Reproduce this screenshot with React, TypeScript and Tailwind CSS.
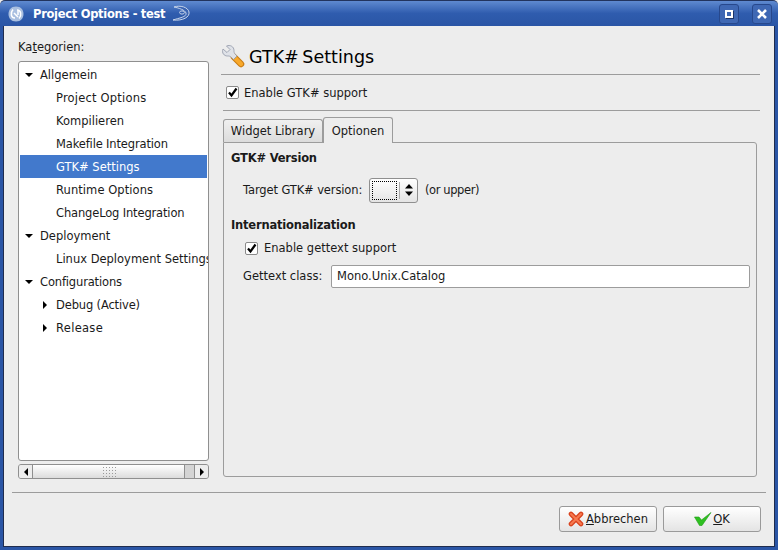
import type { ReactNode } from 'react'

type TreeRow = {
  label: string
  depth: 0 | 1
  arrow?: 'down' | 'right'
  selected?: boolean
  tracking?: string
}

const rows: TreeRow[] = [
  { label: 'Allgemein', depth: 0, arrow: 'down' },
  { label: 'Project Options', depth: 1, tracking: 'tracking-[0.2px]' },
  { label: 'Kompilieren', depth: 1 },
  { label: 'Makefile Integration', depth: 1, tracking: 'tracking-[-0.15px]' },
  { label: 'GTK# Settings', depth: 1, selected: true },
  { label: 'Runtime Options', depth: 1, tracking: 'tracking-[0.07px]' },
  { label: 'ChangeLog Integration', depth: 1, tracking: 'tracking-[-0.15px]' },
  { label: 'Deployment', depth: 0, arrow: 'down' },
  { label: 'Linux Deployment Settings', depth: 1 },
  { label: 'Configurations', depth: 0, arrow: 'down', tracking: 'tracking-[-0.15px]' },
  { label: 'Debug (Active)', depth: 1, arrow: 'right', tracking: 'tracking-[-0.15px]' },
  { label: 'Release', depth: 1, arrow: 'right', tracking: 'tracking-[0.3px]' },
]

function Arrow({ dir }: { dir: 'down' | 'right' | 'left' }) {
  const pts = dir === 'down' ? '1,3 9,3 5,7' : dir === 'right' ? '3,1 7,5 3,9' : '7,1 3,5 7,9'
  return (
    <svg width="10" height="10" viewBox="0 0 10 10" className="shrink-0">
      <polygon points={pts} fill="#000" />
    </svg>
  )
}

function Check() {
  return (
    <span className="flex h-[13px] w-[13px] shrink-0 items-center justify-center rounded-[2px] border border-[#8a8a8a] bg-white">
      <svg width="11" height="11" viewBox="0 0 11 11">
        <path d="M2 5.5 L4.5 8.5 L9.5 1.5" fill="none" stroke="#000" strokeWidth="2.2" />
      </svg>
    </span>
  )
}

function WindowButton({ children }: { children: ReactNode }) {
  return (
    <div className="flex h-5 w-5 items-center justify-center rounded-[3px] border border-[#27488c] bg-[#3f68b4]">
      {children}
    </div>
  )
}

function ProjectIcon() {
  return (
    <svg width="16" height="18" viewBox="0 0 16 18">
      <path d="M8 1.5 C13 1.5 15.5 5 15.5 9 C15.5 13 13 16.5 8 16.5 C3 16.5 0.5 13 0.5 9 C0.5 5 3 1.5 8 1.5 Z" fill="#a9bfe0" />
      <path d="M5 4.5 C2 8 3 13 7 13 M11 13.5 C14 10 13 5 9 5 M6 8 L10 12 M10 6 L10 10" fill="none" stroke="#fff" strokeWidth="1.5" />
    </svg>
  )
}

function LizardIcon() {
  return (
    <svg width="20" height="18" viewBox="0 0 20 18">
      <path d="M3 2 C9 0 17 2 18 7 C19 12 12 16 2 15 C8 13 16 12 15 8 C14 5 8 3 3 2 Z" fill="#3a64b2" stroke="#c6d4ea" strokeWidth="1" />
      <ellipse cx="11" cy="7.5" rx="2.4" ry="1.6" fill="none" stroke="#c6d4ea" />
    </svg>
  )
}

function WrenchIcon() {
  return (
    <svg width="24" height="24" viewBox="0 0 24 24">
      <path d="M13 13 L20 20" stroke="#c87a10" strokeWidth="6.5" strokeLinecap="round" />
      <path d="M14.5 14.5 L20 20" stroke="#f8a92c" strokeWidth="4.5" strokeLinecap="round" />
      <path d="M2 5 L6 8.5 L9 5.5 L5.5 2 C9 0.5 13 2.5 13 6.5 C13 8 13 9 14.5 10.5 L16 12 L12.5 15.5 L10.5 13.5 C9 12 8 12 6.5 12 C3 12 0.5 9 2 5 Z" fill="#dfe2e8" stroke="#8f96a6" strokeWidth="0.8" />
    </svg>
  )
}

function CancelIcon() {
  return (
    <svg width="16" height="16" viewBox="0 0 16 16">
      <path d="M3 3 L13 13 M13 3 L3 13" stroke="#d9441f" strokeWidth="4.6" strokeLinecap="round" />
      <path d="M3 3 L13 13 M13 3 L3 13" stroke="#f77a50" strokeWidth="2" strokeLinecap="round" />
    </svg>
  )
}

function OkIcon() {
  return (
    <svg width="18" height="14" viewBox="0 0 18 14">
      <path d="M0.5 5 L5 5 L7.5 8 L17 0.5 L8 13.5 L5.5 13.5 Z" fill="#2fc021" stroke="#1c9a14" strokeWidth="0.6" />
    </svg>
  )
}

function DialogButton({ icon, children, gap }: { icon: ReactNode; children: ReactNode; gap: string }) {
  return (
    <div className={`flex h-[26px] w-[98px] items-center justify-center rounded-[3px] border border-[#9a9a9a] bg-gradient-to-b from-white to-[#e4e4e4] ${gap}`}>
      {icon}
      <span>{children}</span>
    </div>
  )
}

export default function App() {
  return (
    <div className="flex h-[550px] w-[778px] flex-col overflow-hidden bg-[#ededed] text-[11.5px] leading-[14px] text-[#1a1a1a] [font-family:'DejaVu_Sans',sans-serif]">
      <header className="flex h-[26px] shrink-0 items-center rounded-t-[5px] border-t border-[#22345e] bg-gradient-to-b from-[#5f8ad0] via-[#2f5cae] to-[#2a55a5] pl-2 pr-[6px]">
        <ProjectIcon />
        <span className="ml-[9px] text-[11.5px] font-bold tracking-[-0.3px] text-white">Project Options - test</span>
        <span className="ml-[6px]"><LizardIcon /></span>
        <div className="ml-auto flex gap-[13px]">
          <WindowButton>
            <span className="h-2 w-2 border-2 border-white shadow-[1px_1px_0_#1c3468]" />
          </WindowButton>
          <WindowButton>
            <svg width="12" height="12" viewBox="0 0 12 12">
              <path d="M2 2 L10 10 M10 2 L2 10" stroke="#fff" strokeWidth="2.6" />
            </svg>
          </WindowButton>
        </div>
      </header>

      <div className="flex min-h-0 flex-1 flex-col border-x-[3px] border-b-[3px] border-[#2a55a5]">
        <div className="flex min-h-0 flex-1 flex-col border-x border-b border-[#1f2c4d]">
          <div className="flex min-h-0 flex-1 pl-[14px] pr-[14px]">
            <aside className="flex w-[191px] shrink-0 flex-col">
              <div className="mt-[14px] h-[21px]">
                Ka<span className="underline">t</span>egorien:
              </div>
              <div className="h-[400px] overflow-hidden rounded-[3px] border border-[#8f8f8f] bg-white pt-px">
                {rows.map((row) => (
                  <div
                    key={row.label}
                    className={`mx-px flex h-[23px] items-center whitespace-nowrap ${row.depth === 0 ? 'pl-[4px]' : row.arrow ? 'pl-5' : 'pl-9'} ${row.selected ? 'bg-[#4279cc] text-white' : ''}`}
                  >
                    {row.arrow && <Arrow dir={row.arrow} />}
                    <span className={`${row.arrow ? 'ml-[6px]' : ''} ${row.tracking ?? ''}`}>{row.label}</span>
                  </div>
                ))}
              </div>
              <div className="mt-[3px] flex h-[15px] items-stretch overflow-hidden rounded-[3px] border border-[#8f8f8f] bg-[#d4d4d4]">
                <div className="flex w-[14px] items-center justify-center border-r border-[#8f8f8f] bg-[#ededed]"><Arrow dir="left" /></div>
                <div className="flex w-[152px] items-center justify-center border-r border-[#8f8f8f] bg-gradient-to-b from-white to-[#dcdcdc]">
                  <div className="h-[11px] w-[14px] bg-[radial-gradient(#9a9a9a_0.6px,transparent_0.8px)] bg-[length:3px_3px]" />
                </div>
                <div className="flex-1" />
                <div className="flex w-[14px] items-center justify-center border-l border-[#8f8f8f] bg-[#ededed]"><Arrow dir="right" /></div>
              </div>
            </aside>

            <main className="ml-3 flex min-w-0 flex-1 flex-col">
              <div className="mt-[18px] flex h-[31px] items-start border-b border-[#9c9c9c]">
                <WrenchIcon />
                <span className="ml-1 text-[17.5px] leading-[26px] font-medium text-black [word-spacing:-2px]">GTK# Settings</span>
              </div>
              <div className="ml-[2px] flex h-[36px] items-center border-b border-[#9c9c9c] pl-[3px]">
                <Check />
                <span className="ml-[5px]">Enable GTK# support</span>
              </div>
              <div className="mt-[6px] ml-[2px] mr-[3px] flex h-[25px] items-end">
                <div className="flex h-[23px] w-[100px] items-center justify-center rounded-t-[3px] border border-b-0 border-[#9c9c9c] bg-gradient-to-b from-[#f0f0f0] to-[#dcdcdc]">Widget Library</div>
                <div className="z-10 -mb-px flex h-[26px] w-[70px] items-center justify-center rounded-t-[3px] border border-b-0 border-[#9c9c9c] bg-[#ededed] pt-px">Optionen</div>
              </div>
              <section className="ml-[2px] mr-[3px] h-[335px] rounded-b-[3px] rounded-tr-[3px] border border-[#9c9c9c] px-[7px] pt-2">
                <div className="text-[11.5px] font-bold tracking-[-0.2px]">GTK# Version</div>
                <div className="mt-3 flex h-[26px] items-center pl-3">
                  <span className="w-[119px] shrink-0 whitespace-nowrap tracking-[-0.12px]">Target GTK# version:</span>
                  <div className="ml-[7px] flex h-[25px] w-[49px] items-center rounded-[3px] border border-[#8f8f8f] bg-gradient-to-b from-white to-[#e4e4e4] p-[2px]">
                    <div className="h-full w-[25px] border border-dotted border-black" />
                    <div className="ml-[2px] h-[17px] w-px bg-[#aaaaaa]" />
                    <svg width="12" height="14" viewBox="0 0 12 14" className="ml-[3px]">
                      <polygon points="6,1 10,5.5 2,5.5" fill="#000" />
                      <polygon points="6,13 10,8.5 2,8.5" fill="#000" />
                    </svg>
                  </div>
                  <span className="ml-[7px] tracking-[-0.4px]">(or upper)</span>
                </div>
                <div className="mt-[15px] text-[11.5px] font-bold tracking-[-0.2px]">Internationalization</div>
                <div className="mt-[8px] flex h-[16px] items-center pl-[14px]">
                  <Check />
                  <span className="ml-[6px]">Enable gettext support</span>
                </div>
                <div className="mt-2 flex h-[24px] items-center pl-3">
                  <span className="w-[80px] shrink-0 whitespace-nowrap">Gettext class:</span>
                  <div className="ml-2 flex h-[23px] w-[419px] shrink-0 items-center rounded-[2px] border border-[#9c9c9c] bg-white pl-[5px]">Mono.Unix.Catalog</div>
                </div>
              </section>
            </main>
          </div>

          <footer className="mx-2 h-[54px] shrink-0 border-t border-[#9c9c9c]">
            <div className="mt-[13px] flex justify-end gap-[6px] pr-[5px]">
              <DialogButton icon={<CancelIcon />} gap="gap-[2px]">
                <span className="underline">A</span>bbrechen
              </DialogButton>
              <DialogButton icon={<OkIcon />} gap="gap-[1px]">
                <span className="underline">O</span>K
              </DialogButton>
            </div>
          </footer>
        </div>
      </div>
    </div>
  )
}
